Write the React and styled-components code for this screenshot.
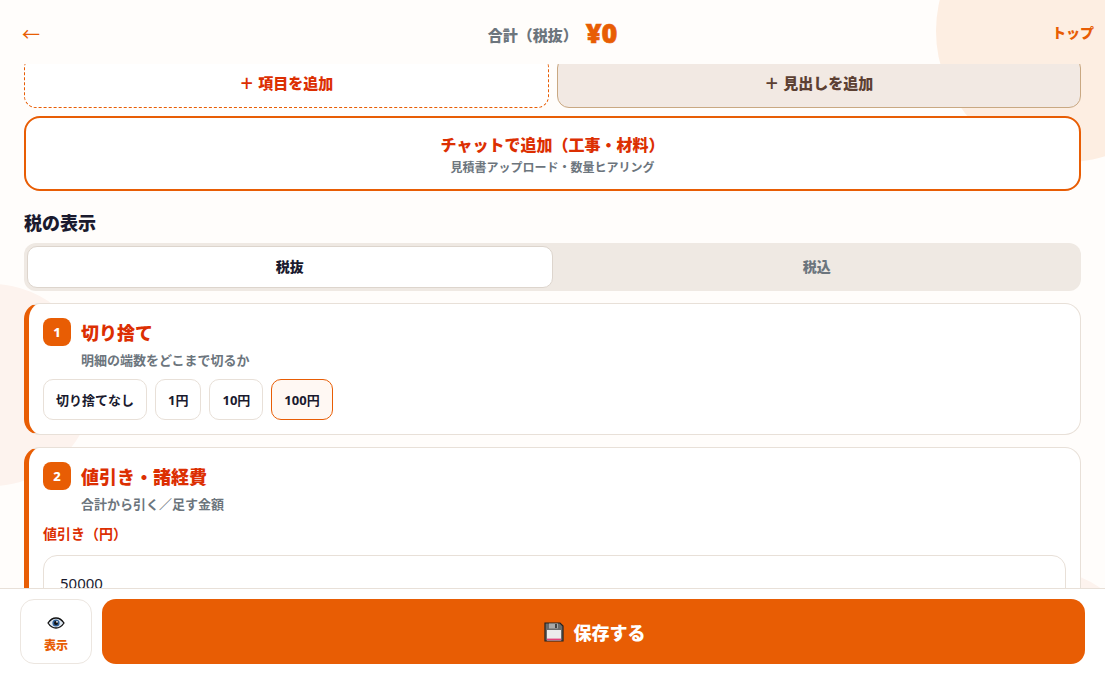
import React from "react";
import styled, { createGlobalStyle } from "styled-components";

const Global = createGlobalStyle`
  html, body, #root { margin: 0; padding: 0; height: 100%; }
  body {
    font-family: "Noto Sans", "Noto Sans CJK JP", sans-serif;
    background: #fffdfb;
    color: #1a1a2e;
    overflow: hidden;
  }
  * { box-sizing: border-box; }
`;

const Page = styled.div`
  position: relative;
  height: 674px;
  display: flex;
  flex-direction: column;
  overflow: hidden;
`;

const Blob = styled.div`
  position: absolute;
  border-radius: 50%;
  background: ${(p) => p.$color};
  width: ${(p) => p.$size}px;
  height: ${(p) => p.$size}px;
  left: ${(p) => p.$x}px;
  top: ${(p) => p.$y}px;
`;

const Header = styled.header`
  position: relative;
  height: 64px;
  flex: none;
  display: grid;
  grid-template-columns: 1fr auto 1fr;
  align-items: center;
  padding: 0 11px 0 11px;
`;

const Back = styled.span`
  font-size: 18px;
  line-height: 1;
  color: #e85d04;
  padding: 4px 0 0 11px;
`;

const Total = styled.div`
  display: flex;
  align-items: center;
  gap: 8px;
`;

const TotalLabel = styled.span`
  font-size: 15px;
  font-weight: 800;
  color: #6c757d;
  padding-top: 5px;
`;

const TotalValue = styled.span`
  font-size: 27px;
  font-weight: 900;
  color: #e85d04;
  line-height: 1;
  -webkit-text-stroke: 0.6px #e85d04;
`;

const TopLink = styled.span`
  justify-self: end;
  font-size: 14px;
  font-weight: 800;
  color: #e85d04;
`;

const Scroll = styled.main`
  position: relative;
  flex: 1;
  min-height: 0;
  overflow: hidden;
  padding: 0 24px;
`;

const Content = styled.div`
  margin-top: -8px;
  display: flex;
  flex-direction: column;
`;

const AddRow = styled.div`
  display: grid;
  grid-template-columns: 1fr 1fr;
  gap: 8px;
  margin-bottom: 8px;
`;

const AddButton = styled.button`
  height: 52px;
  font: inherit;
  font-size: 15px;
  font-weight: 800;
  border-radius: 12px;
  color: ${(p) => (p.$ghost ? "#dc2f02" : "#5c4033")};
  background: ${(p) => (p.$ghost ? "#fff" : "#f2e9e3")};
  border: 1px ${(p) => (p.$ghost ? "dashed #e85d04" : "solid #c9a882")};
`;

const ChatButton = styled.button`
  height: 75px;
  font: inherit;
  background: #fff;
  border: 2px solid #e85d04;
  border-radius: 16px;
  display: flex;
  flex-direction: column;
  align-items: center;
  justify-content: center;
  gap: 4px;
  padding: 2px 0 0;
`;

const ChatTitle = styled.span`
  font-size: 16px;
  font-weight: 900;
  color: #dc2f02;
  line-height: 22px;
`;

const ChatSub = styled.span`
  font-size: 12px;
  font-weight: 700;
  color: #6c757d;
  line-height: 16px;
`;

const SectionHeading = styled.h2`
  margin: 19px 0 7px;
  font-size: 18px;
  font-weight: 800;
  line-height: 26px;
  color: #1a1a2e;
`;

const Tabs = styled.div`
  display: grid;
  grid-template-columns: 1fr 1fr;
  height: 48px;
  padding: 3px;
  background: #efe9e3;
  border-radius: 12px;
  margin-bottom: 12px;
`;

const Tab = styled.div`
  display: flex;
  align-items: center;
  justify-content: center;
  padding: 0 0 2px ${(p) => (p.$active ? "0" : "3px")};
  font-size: 14px;
  font-weight: 800;
  border-radius: 10px;
  color: ${(p) => (p.$active ? "#1a1a2e" : "#6c757d")};
  background: ${(p) => (p.$active ? "#fff" : "transparent")};
  border: 1px solid ${(p) => (p.$active ? "#ddd5cd" : "transparent")};
`;

const Card = styled.section`
  background: #fff;
  border: 1px solid #e8e0d8;
  border-left: 5px solid #e85d04;
  border-radius: 16px;
  padding: 14px;
  margin-bottom: 12px;
`;

const CardHead = styled.div`
  display: flex;
  align-items: center;
  gap: 10px;
`;

const Badge = styled.span`
  width: 28px;
  height: 28px;
  flex: none;
  display: flex;
  align-items: center;
  justify-content: center;
  border-radius: 8px;
  background: #e85d04;
  color: #fff;
  font-size: 13px;
  font-weight: 800;
`;

const CardTitle = styled.h3`
  margin: 0;
  font-size: 18px;
  font-weight: 900;
  line-height: 28px;
  padding-top: 1px;
  height: 28px;
  color: #dc2f02;
`;

const CardSub = styled.p`
  margin: 4px 0 0 38px;
  font-size: 13px;
  font-weight: 700;
  line-height: 20px;
  color: #6c757d;
`;

const Chips = styled.div`
  display: flex;
  gap: 8px;
  margin-top: 9px;
`;

const Chip = styled.button`
  height: 41px;
  padding: 0 12px;
  font: inherit;
  font-size: 13px;
  font-weight: 700;
  color: #1a1a2e;
  border-radius: 10px;
  background: ${(p) => (p.$active ? "#fff8f3" : "#fff")};
  border: 1px solid ${(p) => (p.$active ? "#e85d04" : "#e8e0d8")};
`;

const FieldLabel = styled.label`
  display: block;
  margin-top: 10px;
  font-size: 14px;
  font-weight: 700;
  line-height: 20px;
  color: #dc2f02;
`;

const Input = styled.div`
  margin-top: 11px;
  height: 56px;
  padding: 0 16px;
  display: flex;
  align-items: center;
  border: 1px solid #e8e0d8;
  border-radius: 14px;
  font-size: 15px;
  color: #1a1a2e;
`;

const Footer = styled.footer`
  position: relative;
  height: 86px;
  flex: none;
  display: flex;
  gap: 10px;
  padding: 10px 20px;
  background: #fff;
  border-top: 1px solid #e8e0d8;
`;

const ViewButton = styled.button`
  width: 72px;
  height: 65px;
  font: inherit;
  background: #fff;
  border: 1px solid #ece6e0;
  border-radius: 14px;
  display: flex;
  flex-direction: column;
  align-items: center;
  justify-content: center;
  gap: 8px;
  padding: 8px 0 0;
`;

const ViewLabel = styled.span`
  font-size: 12px;
  font-weight: 800;
  color: #e85d04;
  line-height: 18px;
`;

const SaveButton = styled.button`
  flex: 1;
  height: 65px;
  font: inherit;
  font-size: 18px;
  font-weight: 900;
  color: #fff;
  background: #e85d04;
  border: none;
  border-radius: 14px;
  display: flex;
  align-items: center;
  justify-content: center;
  gap: 10px;
  padding: 0 0 0 2px;
`;

const Disk = () => (
  <svg width="20" height="20" viewBox="0 0 20 20">
    <path d="M1 1h15l3 3v15H1z" fill="#6b6b6b" stroke="#222" strokeWidth="1.2" />
    <rect x="5" y="1.5" width="9" height="5" fill="#a9a9a9" />
    <rect x="11" y="2" width="2" height="4" fill="#444" />
    <rect x="3" y="8" width="14" height="10.4" fill="#ececec" />
    <rect x="3" y="16.6" width="14" height="1.6" fill="#e0457b" />
  </svg>
);

const Eye = () => (
  <svg width="18" height="12" viewBox="0 0 18 12">
    <path d="M1 6c2-3 5-5 8-5s6 2 8 5c-2 3-5 5-8 5S3 9 1 6z" fill="#dfe8f2" stroke="#111" strokeWidth="1.3" />
    <circle cx="9" cy="6" r="3.6" fill="#2f5f96" />
    <circle cx="9" cy="6" r="2" fill="#111" />
    <circle cx="10" cy="4.8" r="0.9" fill="#fff" />
  </svg>
);

export default function App() {
  return (
    <Page>
      <Global />
      <Blob $color="#fdeee2" $size={262} $x={936} $y={-100} />
      <Blob $color="#fdf3ee" $size={202} $x={-109} $y={284} />
      <Blob $color="#fdf3ee" $size={200} $x={943} $y={570} />
      <Header>
        <Back>←</Back>
        <Total>
          <TotalLabel>合計（税抜）</TotalLabel>
          <TotalValue>¥0</TotalValue>
        </Total>
        <TopLink>トップ</TopLink>
      </Header>
      <Scroll>
        <Content>
          <AddRow>
            <AddButton $ghost>＋ 項目を追加</AddButton>
            <AddButton>＋ 見出しを追加</AddButton>
          </AddRow>
          <ChatButton>
            <ChatTitle>チャットで追加（工事・材料）</ChatTitle>
            <ChatSub>見積書アップロード・数量ヒアリング</ChatSub>
          </ChatButton>
          <SectionHeading>税の表示</SectionHeading>
          <Tabs>
            <Tab $active>税抜</Tab>
            <Tab>税込</Tab>
          </Tabs>
          <Card>
            <CardHead>
              <Badge>1</Badge>
              <CardTitle>切り捨て</CardTitle>
            </CardHead>
            <CardSub>明細の端数をどこまで切るか</CardSub>
            <Chips>
              <Chip>切り捨てなし</Chip>
              <Chip>1円</Chip>
              <Chip>10円</Chip>
              <Chip $active>100円</Chip>
            </Chips>
          </Card>
          <Card>
            <CardHead>
              <Badge>2</Badge>
              <CardTitle>値引き・諸経費</CardTitle>
            </CardHead>
            <CardSub>合計から引く／足す金額</CardSub>
            <FieldLabel>値引き（円）</FieldLabel>
            <Input>50000</Input>
          </Card>
        </Content>
      </Scroll>
      <Footer>
        <ViewButton>
          <Eye />
          <ViewLabel>表示</ViewLabel>
        </ViewButton>
        <SaveButton>
          <Disk />
          保存する
        </SaveButton>
      </Footer>
    </Page>
  );
}
